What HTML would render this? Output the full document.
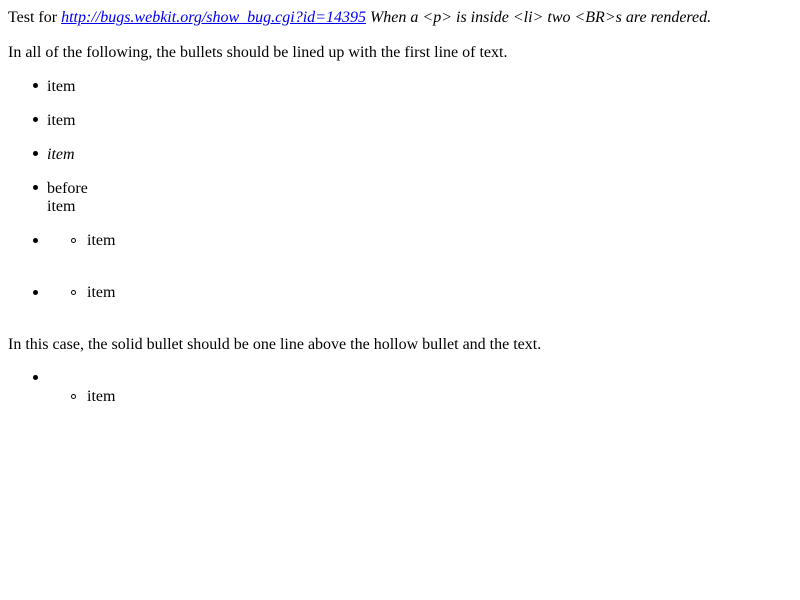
<!DOCTYPE html>
<html><head><style>
body{margin:0;background:#fff;font-family:"Liberation Serif",serif;font-size:16px;color:#000}
.t{position:absolute;line-height:18px;white-space:nowrap}
.b{position:absolute;width:5px;height:5px;border-radius:50%;background:#000}
.h{position:absolute;width:3px;height:3px;border-radius:50%;border:1px solid #000}
a{color:#00e}
</style></head><body>
<div class="t" style="left:8px;top:9px">Test for <a href="#"><i>http://bugs.webkit.org/show_bug.cgi?id=14395</i></a> <i>When a &lt;p&gt; is inside &lt;li&gt; two &lt;BR&gt;s are rendered.</i></div>
<div class="t" style="left:8px;top:44px">In all of the following, the bullets should be lined up with the first line of text.</div>
<div class="b" style="left:33px;top:83px"></div><div class="t" style="left:47px;top:78px">item</div>
<div class="b" style="left:33px;top:117px"></div><div class="t" style="left:47px;top:112px">item</div>
<div class="b" style="left:33px;top:151px"></div><div class="t" style="left:47px;top:146px"><i>item</i></div>
<div class="b" style="left:33px;top:185px"></div><div class="t" style="left:47px;top:180px">before<br>item</div>
<div class="b" style="left:33px;top:238px"></div><div class="h" style="left:71px;top:238px"></div><div class="t" style="left:87px;top:232px">item</div>
<div class="b" style="left:33px;top:290px"></div><div class="h" style="left:71px;top:290px"></div><div class="t" style="left:87px;top:284px">item</div>
<div class="t" style="left:8px;top:336px">In this case, the solid bullet should be one line above the hollow bullet and the text.</div>
<div class="b" style="left:33px;top:375px"></div><div class="h" style="left:71px;top:394px"></div><div class="t" style="left:87px;top:388px">item</div>
</body></html>
